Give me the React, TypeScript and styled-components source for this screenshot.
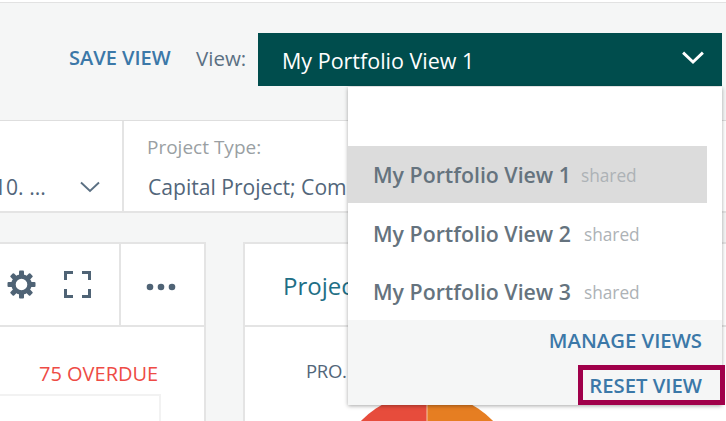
import React from 'react'
import styled, { createGlobalStyle } from 'styled-components'

const GlobalStyle = createGlobalStyle`
    html, body {
        margin: 0;
        padding: 0;
        height: 421px;
        overflow: hidden;
        background: #f5f6f6;
        font-family: "Open Sans", "Noto Sans", sans-serif;
    }
`

const views = [
    { name: 'My Portfolio View 1', active: true },
    { name: 'My Portfolio View 2', active: false },
    { name: 'My Portfolio View 3', active: false },
]

const teeth = [0, 45, 90, 135, 180, 225, 270, 315]

const Chevron: React.FC<{ color: string; width: number; stroke: number }> = ({ color, width, stroke }) => (
    <svg width={width} height={width * 0.6} viewBox="0 0 20 12" fill="none">
        <polyline points="1,1.5 10,10 19,1.5" stroke={color} strokeWidth={stroke} />
    </svg>
)

const App: React.FC = () => {
    return (
        <Page>
            <GlobalStyle />
            <TopStrip />
            <Header>
                <SaveView>SAVE VIEW</SaveView>
                <ViewLabel>View:</ViewLabel>
                <SelectWrap>
                    <SelectButton>
                        <span>My Portfolio View 1</span>
                        <Chevron color="#fff" width={22} stroke={2.6} />
                    </SelectButton>
                    <Menu>
                        <MenuList>
                            {views.map(view => (
                                <MenuItem key={view.name} $active={view.active}>
                                    <ItemName>{view.name}</ItemName>
                                    <Shared>shared</Shared>
                                </MenuItem>
                            ))}
                        </MenuList>
                        <MenuFooter>
                            <FooterLink>MANAGE VIEWS</FooterLink>
                            <FooterLink>RESET VIEW</FooterLink>
                            <Highlight />
                        </MenuFooter>
                    </Menu>
                </SelectWrap>
            </Header>
            <FilterRow>
                <FilterFirst>
                    <FirstValue>10. ...</FirstValue>
                    <Chevron color="#5b7083" width={20} stroke={1.9} />
                </FilterFirst>
                <FilterType>
                    <FilterLabel>Project Type:</FilterLabel>
                    <FilterValue>Capital Project; Com</FilterValue>
                </FilterType>
            </FilterRow>
            <Cards>
                <LeftCard>
                    <CardHeader>
                        <Tools>
                            <svg width="29" height="29" viewBox="0 0 29 29" fill="#4f6375">
                                {teeth.map(angle => (
                                    <rect key={angle} x="12" y="0.5" width="5" height="6" rx="1" transform={`rotate(${angle} 14.5 14.5)`} />
                                ))}
                                <circle cx="14.5" cy="14.5" r="8" fill="none" stroke="#4f6375" strokeWidth="4.4" />
                            </svg>
                            <svg width="27" height="27" viewBox="0 0 27 27" fill="none" stroke="#4f6375" strokeWidth="3">
                                <path d="M1.5 9V1.5H9M18 1.5H25.5V9M25.5 18V25.5H18M9 25.5H1.5V18" />
                            </svg>
                        </Tools>
                        <MoreCell>
                            <svg width="30" height="8" viewBox="0 0 30 8" fill="#4f6375">
                                <circle cx="4" cy="4" r="3.3" />
                                <circle cx="15" cy="4" r="3.3" />
                                <circle cx="26" cy="4" r="3.3" />
                            </svg>
                        </MoreCell>
                    </CardHeader>
                    <CardBody>
                        <Overdue>75 OVERDUE</Overdue>
                        <InnerBox />
                    </CardBody>
                </LeftCard>
                <RightCard>
                    <RightHeader>Project</RightHeader>
                    <RightBody>
                        <ChartTitle>PRO.</ChartTitle>
                        <PieChart viewBox="0 0 184 100">
                            <path d="M92 0A92 92 0 0 0 0 92H92Z" fill="#e74c3c" />
                            <path d="M92 0A92 92 0 0 1 184 92H92Z" fill="#e67e22" />
                            <line x1="92" y1="0" x2="92" y2="92" stroke="#f4c7a8" strokeWidth="1" />
                        </PieChart>
                    </RightBody>
                </RightCard>
            </Cards>
        </Page>
    )
}

export default App

const Page = styled.div`
    width: 726px;
    height: 421px;
    overflow: hidden;
    display: flex;
    flex-direction: column;
    background-color: #f5f6f6;
`

const TopStrip = styled.div`
    height: 2px;
    flex-shrink: 0;
    background-color: #fff;
    border-bottom: 1px solid #e2e2e2;
`

const Header = styled.header`
    height: 118px;
    flex-shrink: 0;
    box-sizing: border-box;
    display: flex;
    align-items: flex-start;
    padding: 30px 4px 0 69px;
    border-bottom: 1px solid #dedede;
`

const SaveView = styled.a`
    font-size: 20px;
    font-weight: 600;
    line-height: 50px;
    color: #3b78a8;
    width: 127px;
    white-space: nowrap;
`

const ViewLabel = styled.span`
    font-size: 20.5px;
    line-height: 50px;
    color: #5b7083;
    width: 62px;
`

const SelectWrap = styled.div`
    position: relative;
    width: 464px;
`

const SelectButton = styled.div`
    height: 53px;
    box-sizing: border-box;
    display: flex;
    align-items: center;
    justify-content: space-between;
    padding: 2px 18px 0 24px;
    background-color: #004d4d;
    color: #fff;
    font-size: 21.5px;

    svg {
        margin-top: -6px;
    }
`

const Menu = styled.div`
    position: absolute;
    z-index: 5;
    top: 54px;
    left: 90px;
    width: 374px;
    height: 318px;
    display: flex;
    flex-direction: column;
    background-color: #fff;
    box-shadow: 0 1px 4px rgba(0, 0, 0, 0.35);
`

const MenuList = styled.ul`
    flex: 1;
    list-style: none;
    margin: 0;
    padding: 59px 15px 0 0;
`

const MenuItem = styled.li<{ $active: boolean }>`
    display: flex;
    align-items: center;
    gap: ${props => (props.$active ? '10px' : '13px')};
    height: ${props => (props.$active ? '57px' : '58px')};
    box-sizing: border-box;
    padding: ${props => (props.$active ? '0' : '3px')} 0 0 25px;
    background-color: ${props => (props.$active ? '#dcdcdc' : 'transparent')};
`

const ItemName = styled.span`
    font-size: 21.3px;
    font-weight: 600;
    color: #65737e;
`

const Shared = styled.span`
    font-size: 17.3px;
    margin-top: 2px;
    color: #adb2b6;
`

const MenuFooter = styled.div`
    position: relative;
    height: 85px;
    flex-shrink: 0;
    box-sizing: border-box;
    display: flex;
    flex-direction: column;
    align-items: flex-end;
    padding: 6px 20px 0 0;
    gap: 16px;
    background-color: #f5f6f6;
`

const FooterLink = styled.a`
    font-size: 20.3px;
    line-height: 29px;
    font-weight: 600;
    color: #3b78a8;
`

const Highlight = styled.div`
    position: absolute;
    right: -3px;
    bottom: 0;
    width: 147px;
    height: 40px;
    box-sizing: border-box;
    border: 5px solid #a0004a;
`

const FilterRow = styled.section`
    height: 92px;
    flex-shrink: 0;
    box-sizing: border-box;
    display: flex;
    background-color: #fff;
    border-bottom: 2px solid #e4e4e4;
`

const FilterFirst = styled.div`
    width: 124px;
    flex-shrink: 0;
    box-sizing: border-box;
    display: flex;
    align-items: center;
    justify-content: space-between;
    padding: 42px 22px 0 0;
    border-right: 2px solid #e4e4e4;
`

const FilterType = styled.div`
    flex: 1;
    padding: 12px 0 0 23px;
    white-space: nowrap;
`

const FilterLabel = styled.div`
    font-size: 19px;
    line-height: 28px;
    color: #9a9fa3;
    margin-bottom: 12px;
`

const FilterValue = styled.div`
    font-size: 21.1px;
    line-height: 28px;
    color: #52667a;
    padding-left: 1px;
    white-space: nowrap;
`

const FirstValue = styled(FilterValue)`
    margin-left: -7px;
`

const Cards = styled.main`
    flex: 1;
    display: flex;
    gap: 37px;
    padding-top: 29px;
`

const LeftCard = styled.section`
    width: 206px;
    flex-shrink: 0;
    box-sizing: border-box;
    background-color: #fff;
    border: 2px solid #e4e4e4;
    border-left: 0;
    border-bottom: 0;
`

const CardHeader = styled.div`
    height: 83px;
    box-sizing: border-box;
    display: flex;
    border-bottom: 2px solid #e4e4e4;
`

const Tools = styled.div`
    width: 121px;
    box-sizing: border-box;
    display: flex;
    align-items: center;
    gap: 28px;
    padding: 0 0 1px 7px;
    border-right: 2px solid #e4e4e4;
`

const MoreCell = styled.div`
    flex: 1;
    display: flex;
    align-items: center;
    padding: 5px 0 0 25px;
`

const CardBody = styled.div`
    padding: 32px 0 0 0;
`

const Overdue = styled.div`
    font-size: 20px;
    line-height: 30px;
    color: #ee4b45;
    padding-left: 39px;
`

const InnerBox = styled.div`
    margin-top: 5px;
    width: 161px;
    height: 60px;
    box-sizing: border-box;
    border: 2px solid #f2f2f2;
    border-left: 0;
`

const RightCard = styled.section`
    flex: 1;
    background-color: #fff;
    border: 2px solid #e4e4e4;
    border-right: 0;
    border-bottom: 0;
`

const RightHeader = styled.div`
    height: 83px;
    box-sizing: border-box;
    padding: 22px 0 0 38px;
    font-size: 24px;
    line-height: 40px;
    color: #1f6f86;
    border-bottom: 2px solid #e4e4e4;
    white-space: nowrap;
`

const RightBody = styled.div`
    position: relative;
    padding: 30px 0 0 61px;
`

const ChartTitle = styled.div`
    font-size: 18.5px;
    line-height: 28px;
    letter-spacing: -0.3px;
    color: #52667a;
`

const PieChart = styled.svg`
    position: absolute;
    left: 90px;
    top: 66px;
    width: 184px;
    height: 100px;
`
